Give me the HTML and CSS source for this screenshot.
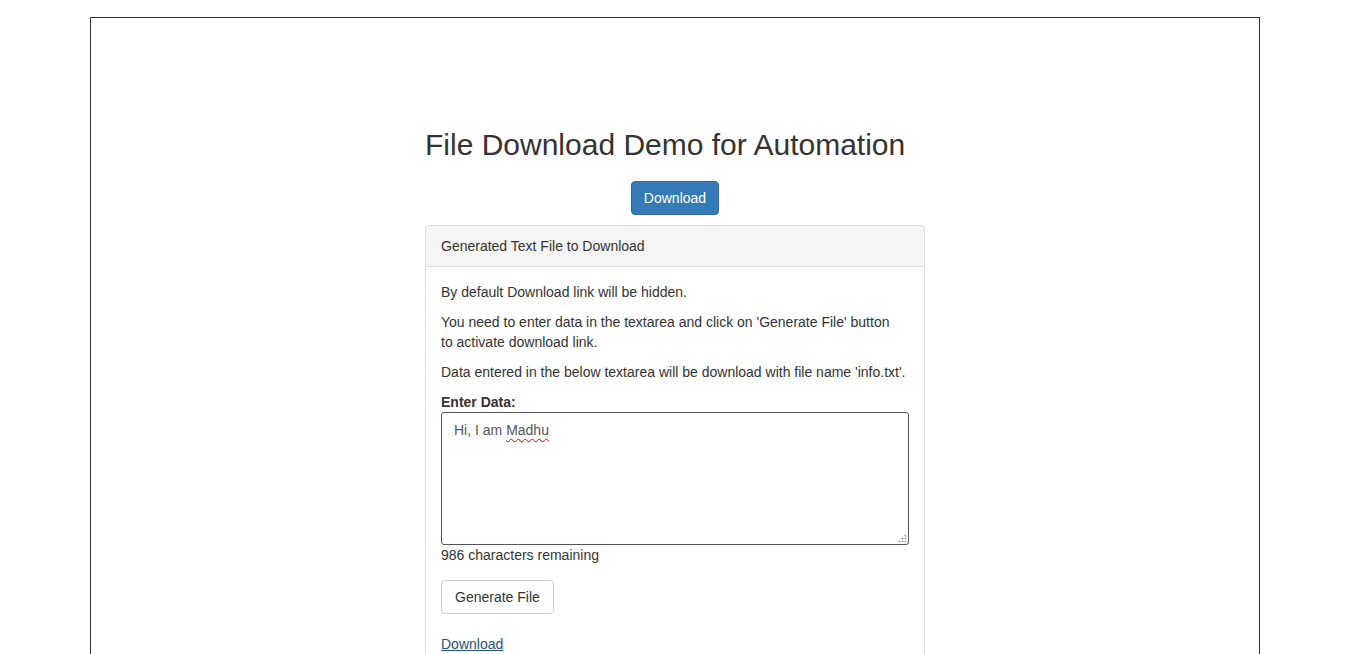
FILE: index.html
```html
<!DOCTYPE html>
<html>
<head>
<meta charset="utf-8">
<title>File Download Demo for Automation</title>
<link rel="stylesheet" href="styles.css">
</head>
<body>
<div class="page">
  <div class="col">
    <h2 class="title">File Download Demo for Automation</h2>
    <div class="center">
      <button class="btn btn-primary">Download</button>
    </div>
    <div class="panel">
      <div class="panel-heading">Generated Text File to Download</div>
      <div class="panel-body">
        <p>By default Download link will be hidden.</p>
        <p class="narrow">You need to enter data in the textarea and click on 'Generate File' button to activate download link.</p>
        <p>Data entered in the below textarea will be download with file name 'info.txt'.</p>
        <label class="label">Enter Data:</label>
        <div class="textarea">Hi, I am <span class="spell">Madhu</span><span class="grip"></span></div>
        <div class="remaining">986 characters remaining</div>
        <button class="btn btn-default">Generate File</button>
        <a class="link" href="#">Download</a>
      </div>
    </div>
  </div>
</div>
</body>
</html>
```
FILE: styles.css
```css
html, body {
  margin: 0;
  padding: 0;
  background: #fff;
}
body {
  font-family: "Liberation Sans", Arial, Helvetica, sans-serif;
  font-size: 14px;
  line-height: 20px;
  color: #333;
}
.page {
  box-sizing: border-box;
  width: 1170px;
  margin: 17px 0 0 90px;
  border: 1px solid #333;
  padding-top: 110px;
  min-height: 700px;
}
.col {
  width: 500px;
  margin: 0 auto;
}
.title {
  margin: 0;
  font-size: 30px;
  line-height: 33px;
  font-weight: 400;
  color: #333;
}
.center {
  text-align: center;
  margin-top: 20px;
}
.btn {
  display: inline-block;
  box-sizing: border-box;
  height: 34px;
  padding: 6px 12px;
  font-family: inherit;
  font-size: 14px;
  line-height: 20px;
  border: 1px solid transparent;
  border-radius: 4px;
  cursor: pointer;
}
.btn-primary {
  background: #337ab7;
  border-color: #2e6da4;
  color: #fff;
}
.btn-default {
  background: #fff;
  border-color: #ccc;
  color: #333;
  margin-top: 15px;
  padding: 6px 13px;
}
.panel {
  margin-top: 10px;
  border: 1px solid #ddd;
  border-radius: 4px;
  background: #fff;
}
.panel-heading {
  padding: 10px 15px;
  background: #f5f5f5;
  border-bottom: 1px solid #ddd;
  border-radius: 3px 3px 0 0;
}
.panel-body {
  padding: 15px;
}
.panel-body p {
  margin: 0 0 10px;
}
.panel-body p.narrow {
  max-width: 460px;
}
.label {
  display: block;
  font-weight: 700;
}
.textarea {
  position: relative;
  box-sizing: border-box;
  height: 133px;
  padding: 7px 12px;
  border: 1px solid #555;
  border-radius: 3px;
  color: #555;
}
.spell {
  text-decoration: underline wavy #e00;
  text-decoration-thickness: 1px;
  text-underline-offset: 3px;
}
.grip {
  position: absolute;
  right: 2px;
  bottom: 2px;
  width: 8px;
  height: 8px;
  background:
    radial-gradient(circle, #999 0.8px, transparent 1.2px) 6px 0 / 3px 3px no-repeat,
    radial-gradient(circle, #999 0.8px, transparent 1.2px) 3px 3px / 3px 3px no-repeat,
    radial-gradient(circle, #999 0.8px, transparent 1.2px) 6px 3px / 3px 3px no-repeat,
    radial-gradient(circle, #999 0.8px, transparent 1.2px) 0 6px / 3px 3px no-repeat,
    radial-gradient(circle, #999 0.8px, transparent 1.2px) 3px 6px / 3px 3px no-repeat,
    radial-gradient(circle, #999 0.8px, transparent 1.2px) 6px 6px / 3px 3px no-repeat;
}
.remaining {
  display: block;
}
.link {
  display: table;
  margin-top: 20px;
  color: #23527c;
  text-decoration: underline;
}
```
